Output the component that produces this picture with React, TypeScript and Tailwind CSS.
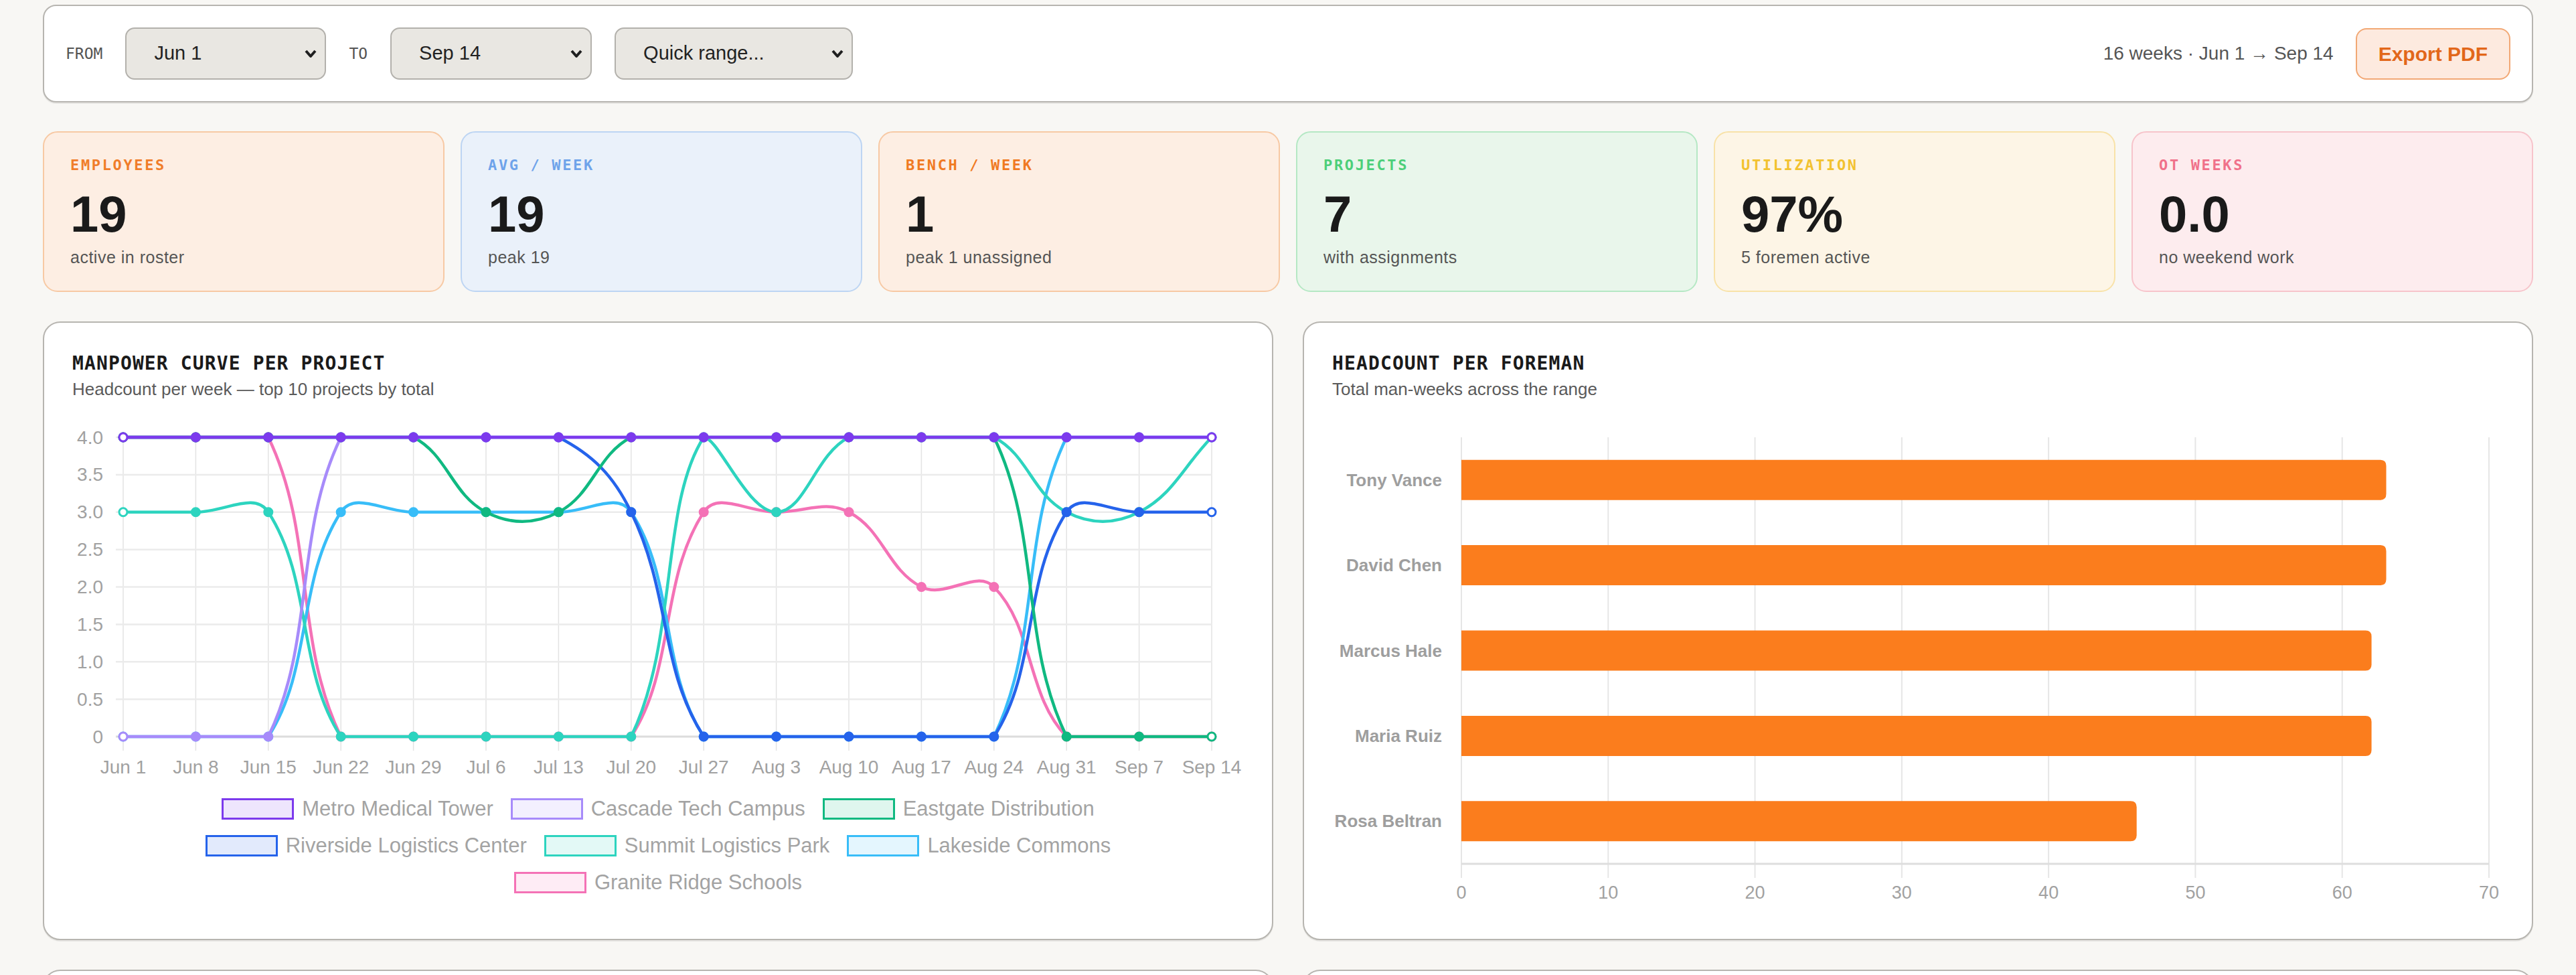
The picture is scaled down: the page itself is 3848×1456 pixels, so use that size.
import React from "react"

type Pt = { x: number; y: number }

const weeks = [
  "Jun 1", "Jun 8", "Jun 15", "Jun 22", "Jun 29", "Jul 6", "Jul 13", "Jul 20",
  "Jul 27", "Aug 3", "Aug 10", "Aug 17", "Aug 24", "Aug 31", "Sep 7", "Sep 14",
]

const projects = [
  { name: "Metro Medical Tower", color: "#7c3aed", data: [4, 4, 4, 4, 4, 4, 4, 4, 4, 4, 4, 4, 4, 4, 4, 4] },
  { name: "Cascade Tech Campus", color: "#a78bfa", data: [0, 0, 0, 4, 4, 4, 4, 4, 4, 4, 4, 4, 4, 4, 4, 4] },
  { name: "Eastgate Distribution", color: "#10b981", data: [4, 4, 4, 4, 4, 3, 3, 4, 4, 4, 4, 4, 4, 0, 0, 0] },
  { name: "Riverside Logistics Center", color: "#2563eb", data: [4, 4, 4, 4, 4, 4, 4, 3, 0, 0, 0, 0, 0, 3, 3, 3] },
  { name: "Summit Logistics Park", color: "#2dd4bf", data: [3, 3, 3, 0, 0, 0, 0, 0, 4, 3, 4, 4, 4, 3, 3, 4] },
  { name: "Lakeside Commons", color: "#38bdf8", data: [0, 0, 0, 3, 3, 3, 3, 3, 0, 0, 0, 0, 0, 4, 4, 4] },
  { name: "Granite Ridge Schools", color: "#f472b6", data: [4, 4, 4, 0, 0, 0, 0, 0, 3, 3, 3, 2, 2, 0, 0, 0] },
]

const foremen = [
  { name: "Tony Vance", value: 63 },
  { name: "David Chen", value: 63 },
  { name: "Marcus Hale", value: 62 },
  { name: "Maria Ruiz", value: 62 },
  { name: "Rosa Beltran", value: 46 },
]

const kpis = [
  { label: "EMPLOYEES", value: "19", sub: "active in roster", bg: "bg-[#fdeee3]", border: "border-[#f7c9a4]", text: "text-[#f07d2a]" },
  { label: "AVG / WEEK", value: "19", sub: "peak 19", bg: "bg-[#eaf1fa]", border: "border-[#bdd5f3]", text: "text-[#6ea3ea]" },
  { label: "BENCH / WEEK", value: "1", sub: "peak 1 unassigned", bg: "bg-[#fdeee3]", border: "border-[#f7c9a4]", text: "text-[#f07a22]" },
  { label: "PROJECTS", value: "7", sub: "with assignments", bg: "bg-[#e9f6eb]", border: "border-[#b5e8c4]", text: "text-[#4ccf79]" },
  { label: "UTILIZATION", value: "97%", sub: "5 foremen active", bg: "bg-[#fdf5e6]", border: "border-[#f8e2a8]", text: "text-[#f2c230]" },
  { label: "OT WEEKS", value: "0.0", sub: "no weekend work", bg: "bg-[#fdecee]", border: "border-[#f7c4cb]", text: "text-[#f0718a]" },
]

// line chart geometry (svg coords)
const L = { left: 76, right: 1702, top: 45, bottom: 492 }
const lx = (i: number) => L.left + (i * (L.right - L.left)) / 15
const ly = (v: number) => L.bottom - (v / 4) * (L.bottom - L.top)

// chart.js style spline, tension 0.4, control points kept inside the plot
function splinePath(pts: Pt[]) {
  const t = 0.4
  const clamp = (p: Pt) => ({
    x: Math.min(Math.max(p.x, L.left), L.right),
    y: Math.min(Math.max(p.y, L.top), L.bottom),
  })
  const cps = pts.map((p1, i) => {
    const p0 = pts[i - 1] ?? p1
    const p2 = pts[i + 1] ?? p1
    const d01 = Math.hypot(p1.x - p0.x, p1.y - p0.y)
    const d12 = Math.hypot(p2.x - p1.x, p2.y - p1.y)
    let s01 = d01 / (d01 + d12)
    let s12 = d12 / (d01 + d12)
    if (isNaN(s01)) s01 = 0
    if (isNaN(s12)) s12 = 0
    const fa = t * s01
    const fb = t * s12
    return {
      prev: clamp({ x: p1.x - fa * (p2.x - p0.x), y: p1.y - fa * (p2.y - p0.y) }),
      next: clamp({ x: p1.x + fb * (p2.x - p0.x), y: p1.y + fb * (p2.y - p0.y) }),
    }
  })
  let d = `M ${pts[0].x} ${pts[0].y}`
  for (let i = 1; i < pts.length; i++) {
    const a = cps[i - 1].next
    const b = cps[i].prev
    d += ` C ${a.x} ${a.y} ${b.x} ${b.y} ${pts[i].x} ${pts[i].y}`
  }
  return d
}

function Chevron() {
  return (
    <svg width="18" height="14" viewBox="0 0 18 14">
      <path d="M2 3 L9 11 L16 3" fill="none" stroke="#1f1f1f" strokeWidth="4" strokeLinejoin="round" />
    </svg>
  )
}

function Select({ value, width }: { value: string; width: string }) {
  return (
    <div
      className={`flex h-[78px] ${width} items-center justify-between rounded-[14px] border-2 border-[#b3b1ac] bg-[#e9e7e2] pl-[41px] pr-[12px] text-[29px] text-[#222]`}
    >
      <span>{value}</span>
      <Chevron />
    </div>
  )
}

function ManpowerChart() {
  const ticks = [4, 3.5, 3, 2.5, 2, 1.5, 1, 0.5, 0]
  return (
    <svg width="1750" height="560" className="block" fontFamily="'Liberation Sans', Arial, sans-serif">
      {weeks.map((w, i) => (
        <line key={w} x1={lx(i)} x2={lx(i)} y1={L.top} y2={513} stroke="#e3e3e3" strokeWidth="1.5" />
      ))}
      {ticks.map((v) => (
        <line key={v} x1={65} x2={L.right} y1={ly(v)} y2={ly(v)} stroke={v === 0 ? "#dcdcdc" : "#ebebeb"} strokeWidth={v === 0 ? 3 : 2.5} />
      ))}
      {ticks.map((v) => (
        <text key={v} x={46} y={ly(v)} textAnchor="end" dominantBaseline="central" fontSize="28" fill="#a1a1a1">
          {v === 0 ? "0" : v.toFixed(1)}
        </text>
      ))}
      {weeks.map((w, i) => (
        <text key={w} x={lx(i)} y={537} textAnchor="middle" dominantBaseline="central" fontSize="28" fill="#a1a1a1">
          {w}
        </text>
      ))}
      {[...projects].reverse().map((p) => {
        const pts = p.data.map((v, i) => ({ x: lx(i), y: ly(v) }))
        return (
          <g key={p.name}>
            <path d={splinePath(pts)} fill="none" stroke={p.color} strokeWidth="4.5" />
            {pts.map((pt, i) => {
              const edge = i === 0 || i === pts.length - 1
              return (
                <circle
                  key={i}
                  cx={pt.x}
                  cy={pt.y}
                  r={6}
                  fill={edge ? "#fff" : p.color}
                  stroke={p.color}
                  strokeWidth={3}
                />
              )
            })}
          </g>
        )
      })}
    </svg>
  )
}

function ForemanChart() {
  const B = { left: 193, right: 1728, top: 45, axis: 682 }
  const bx = (v: number) => B.left + (v / 70) * (B.right - B.left)
  const band = (B.axis - B.top) / foremen.length
  return (
    <svg width="1750" height="750" className="block" fontFamily="'Liberation Sans', Arial, sans-serif">
      {[0, 10, 20, 30, 40, 50, 60, 70].map((v) => (
        <g key={v}>
          <line x1={bx(v)} x2={bx(v)} y1={B.top} y2={703} stroke="#e6e6e6" strokeWidth="2" />
          <text x={bx(v)} y={725} textAnchor="middle" dominantBaseline="central" fontSize="27" fill="#a1a1a1">
            {v}
          </text>
        </g>
      ))}
      <line x1={B.left} x2={B.right} y1={B.axis} y2={B.axis} stroke="#dedede" strokeWidth="3" />
      {foremen.map((f, i) => {
        const c = B.top + band * i + band / 2
        const x0 = B.left
        const x1 = bx(f.value)
        const y0 = c - 30
        const y1 = c + 30
        const r = 9
        return (
          <g key={f.name}>
            <path
              d={`M ${x0} ${y0} H ${x1 - r} Q ${x1} ${y0} ${x1} ${y0 + r} V ${y1 - r} Q ${x1} ${y1} ${x1 - r} ${y1} H ${x0} Z`}
              fill="#fb7d1d"
            />
            <text x={164} y={c} textAnchor="end" dominantBaseline="central" fontSize="26" fontWeight="700" fill="#9e9e9e">
              {f.name}
            </text>
          </g>
        )
      })}
    </svg>
  )
}

function ChartCard({ title, subtitle, children }: { title: string; subtitle: string; children: React.ReactNode }) {
  return (
    <div className="rounded-[26px] border-2 border-[#b7b5b0] bg-white px-[42px] pb-[44px] pt-[44px] shadow-[0_2px_0_rgba(0,0,0,0.07)]">
      <div className="font-['DejaVu_Sans_Mono',monospace] text-[28px] font-bold leading-[34px] tracking-[0.04em] text-[#1a1a1a]">
        {title}
      </div>
      <div className="mt-[5px] text-[26px] leading-[32px] text-[#5a5a5a]">{subtitle}</div>
      <div className="mt-[11px]">{children}</div>
    </div>
  )
}

export default function App() {
  return (
    <div className="min-h-screen bg-[#f8f7f4] px-[64px] pb-[64px] pt-[7px] font-['Liberation_Sans',Arial,sans-serif]">
      <div className="flex h-[146px] items-center justify-between rounded-[20px] border-2 border-[#b7b5b0] bg-white px-[32px] shadow-[0_2px_0_rgba(0,0,0,0.07)]">
        <div className="flex items-center gap-[34px]">
          <span className="font-['DejaVu_Sans_Mono',monospace] text-[23px] text-[#555]">FROM</span>
          <Select value="Jun 1" width="w-[300px]" />
          <span className="font-['DejaVu_Sans_Mono',monospace] text-[23px] text-[#555]">TO</span>
          <Select value="Sep 14" width="w-[301px]" />
          <Select value="Quick range..." width="w-[356px]" />
        </div>
        <div className="flex items-center gap-[33px]">
          <span className="text-[28px] text-[#555]">16 weeks · Jun 1 → Sep 14</span>
          <button className="h-[77px] rounded-[16px] border-2 border-[#f2a875] bg-[#fdeadf] px-[32px] text-[30px] font-bold text-[#e2671a]">
            Export PDF
          </button>
        </div>
      </div>

      <div className="mt-[43px] grid grid-cols-6 gap-[24px]">
        {kpis.map((k) => (
          <div key={k.label} className={`h-[240px] rounded-[22px] border-2 ${k.border} ${k.bg} px-[39px] pt-[35px]`}>
            <div className={`font-['DejaVu_Sans_Mono',monospace] text-[22px] font-bold leading-[28px] tracking-[0.12em] ${k.text}`}>
              {k.label}
            </div>
            <div className="mt-[21px] text-[76px] font-bold leading-[76px] text-[#1a1a1a]">{k.value}</div>
            <div className="mt-[11px] text-[25px] leading-[30px] tracking-[0.02em] text-[#555]">{k.sub}</div>
          </div>
        ))}
      </div>

      <div className="mt-[44px] grid grid-cols-2 gap-[44px]">
        <ChartCard title="MANPOWER CURVE PER PROJECT" subtitle="Headcount per week — top 10 projects by total">
          <ManpowerChart />
          <div className="mt-[24px] flex flex-wrap justify-center gap-x-[26px] gap-y-[23px]">
            {projects.map((p) => (
              <div key={p.name} className="flex items-center gap-[12px]">
                <span
                  className="h-[32px] w-[108px] border-[3px]"
                  style={{ borderColor: p.color, backgroundColor: p.color + "22" }}
                />
                <span className="text-[31px] leading-[32px] text-[#a3a3a3]">{p.name}</span>
              </div>
            ))}
          </div>
        </ChartCard>
        <ChartCard title="HEADCOUNT PER FOREMAN" subtitle="Total man-weeks across the range">
          <ForemanChart />
        </ChartCard>
        <div className="h-[400px] rounded-[26px] border-2 border-[#b7b5b0] bg-white" />
        <div className="h-[400px] rounded-[26px] border-2 border-[#b7b5b0] bg-white" />
      </div>
    </div>
  )
}
